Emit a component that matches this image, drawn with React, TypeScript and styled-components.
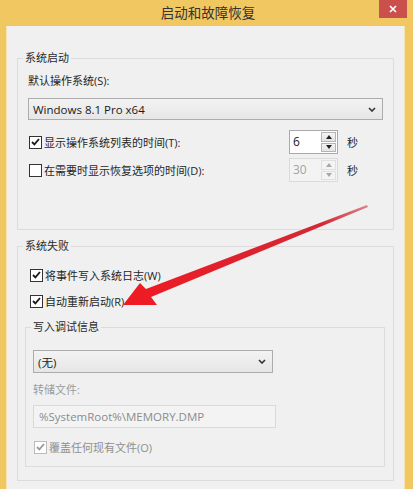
import React from 'react';
import styled, { createGlobalStyle } from 'styled-components';

const GlobalStyle = createGlobalStyle`
  html, body { margin: 0; padding: 0; background: #f1c762; }
  body {
    font-family: "Open Sans", "Noto Sans CJK SC", sans-serif;
    font-size: 11px;
    color: #1f1f1f;
  }
`;

const Window = styled.div`
  position: relative;
  width: 413px;
  height: 489px;
  background: #f1c762;
  display: flex;
  flex-direction: column;
  overflow: hidden;
`;

const TitleBar = styled.div`
  height: 26px;
  flex: none;
  display: grid;
  grid-template-columns: 1fr auto 1fr;
  align-items: start;
`;

const Title = styled.div`
  grid-column: 2;
  line-height: 26px;
  font-size: 13.5px;
  color: #333;
  padding-left: 3px;
`;

const CloseButton = styled.div`
  grid-column: 3;
  justify-self: end;
  width: 28px;
  height: 18px;
  margin-right: 6px;
  background: #c9504c;
  display: flex;
  align-items: center;
  justify-content: center;
`;

const Body = styled.div`
  flex: 1;
  margin: 0 9px 0 7px;
  background: #f0f0f0;
  padding: 25px 10px 0 10px;
  box-shadow: -1px 0 0 #f7e3b0, 1px 0 0 #f7e3b0;
`;

const Group = styled.fieldset`
  margin: 0;
  min-width: 0;
  border: 1px solid #dcdcdc;
  padding: 0 10px 47px 10px;
  display: flex;
  flex-direction: column;
  align-items: flex-start;
`;

const FailGroup = styled(Group)`
  margin-top: 9px;
  padding: 0 10px 13px 11px;
`;

const DebugGroup = styled(Group)`
  align-self: stretch;
  margin: 11px -2px 0 -4px;
  padding: 0 10px 11px 7px;
`;

const Legend = styled.legend<{ $shift?: number }>`
  padding: 0 2px;
  margin-left: ${p => p.$shift ?? -5}px;
  line-height: 14px;
  height: 14px;
  color: #2a2a2a;
`;

const FieldLabel = styled.div<{ $disabled?: boolean; $top: number }>`
  line-height: 16px;
  margin-top: ${p => p.$top}px;
  color: ${p => (p.$disabled ? '#9b9b9b' : '#1f1f1f')};
`;

const Select = styled.div<{ $width?: number; $top: number; $height: number }>`
  box-sizing: border-box;
  margin-top: ${p => p.$top}px;
  width: ${p => (p.$width ? `${p.$width}px` : '100%')};
  height: ${p => p.$height}px;
  border: 1px solid #acacac;
  background: linear-gradient(#f3f3f3, #e6e6e6);
  display: flex;
  align-items: center;
  justify-content: space-between;
  padding: 0 6px 0 4px;
  font-size: 11.5px;
  color: #1a1a1a;
`;

const TextBox = styled.div<{ $width: number; $top: number }>`
  box-sizing: border-box;
  margin-top: ${p => p.$top}px;
  width: ${p => p.$width}px;
  height: 23px;
  border: 1px solid #d9d9d9;
  background: #f3f3f3;
  display: flex;
  align-items: center;
  padding-left: 5px;
  font-size: 11.5px;
  color: #8c8c8c;
`;

const CheckRow = styled.div<{ $top: number; $height?: number }>`
  align-self: stretch;
  display: flex;
  align-items: center;
  margin-top: ${p => p.$top}px;
  height: ${p => p.$height ?? 16}px;
  margin-left: 1px;
`;

const CheckLabel = styled.span<{ $disabled?: boolean }>`
  flex: 1;
  white-space: nowrap;
  color: ${p => (p.$disabled ? '#8f8f8f' : '#1f1f1f')};
`;

const Box = styled.span<{ $disabled?: boolean }>`
  box-sizing: border-box;
  width: 13px;
  height: 13px;
  margin-right: 2px;
  flex: none;
  border: 1px solid ${p => (p.$disabled ? '#bcbcbc' : '#333')};
  background: #fff;
  display: flex;
  align-items: center;
  justify-content: center;
`;

const Spinner = styled.div<{ $disabled?: boolean }>`
  box-sizing: border-box;
  width: 49px;
  height: 24px;
  display: flex;
  border: 1px solid ${p => (p.$disabled ? '#dadada' : '#a9a9a9')};
  background: ${p => (p.$disabled ? '#f3f3f3' : '#fff')};
`;

const SpinValue = styled.div<{ $disabled?: boolean }>`
  flex: 1;
  padding: 2px 0 0 3px;
  font-size: 12px;
  color: ${p => (p.$disabled ? '#a3a3a3' : '#1a1a1a')};
`;

const SpinButtons = styled.div`
  width: 15px;
  display: flex;
  flex-direction: column;
  gap: 1px;
  padding: 1px 1px 1px 0;
`;

const SpinButton = styled.div<{ $disabled?: boolean }>`
  flex: 1;
  border: 1px solid ${p => (p.$disabled ? '#e0e0e0' : '#b5b5b5')};
  background: ${p => (p.$disabled ? '#f4f4f4' : 'linear-gradient(#f4f4f4, #e3e3e3)')};
  display: flex;
  align-items: center;
  justify-content: center;
`;

const Unit = styled.span`
  margin: 0 25px 0 9px;
  font-size: 11px;
`;

const ArrowLayer = styled.svg`
  position: absolute;
  left: 0;
  top: 0;
  pointer-events: none;
`;

function Check({ disabled }: { disabled?: boolean }) {
  return (
    <Box $disabled={disabled}>
      <svg width="9" height="8" viewBox="0 0 9 8">
        <polyline
          points="1,4 3.4,6.4 8,1"
          fill="none"
          stroke={disabled ? '#9a9a9a' : '#1a1a1a'}
          strokeWidth="1.8"
        />
      </svg>
    </Box>
  );
}

function Chevron() {
  return (
    <svg width="8" height="5" viewBox="0 0 8 5">
      <polyline points="1,1 4,4 7,1" fill="none" stroke="#333" strokeWidth="1.6" />
    </svg>
  );
}

function Triangle({ up, disabled }: { up?: boolean; disabled?: boolean }) {
  return (
    <svg width="6" height="4" viewBox="0 0 6 4">
      <polygon
        points={up ? '0,4 3,0 6,4' : '0,0 6,0 3,4'}
        fill={disabled ? '#a8a8a8' : '#222'}
      />
    </svg>
  );
}

function SpinBox({ value, disabled }: { value: string; disabled?: boolean }) {
  return (
    <Spinner $disabled={disabled}>
      <SpinValue $disabled={disabled}>{value}</SpinValue>
      <SpinButtons>
        <SpinButton $disabled={disabled}>
          <Triangle up disabled={disabled} />
        </SpinButton>
        <SpinButton $disabled={disabled}>
          <Triangle disabled={disabled} />
        </SpinButton>
      </SpinButtons>
    </Spinner>
  );
}

export default function App() {
  return (
    <Window>
      <GlobalStyle />
      <TitleBar>
        <Title>启动和故障恢复</Title>
        <CloseButton>
          <svg width="8" height="8" viewBox="0 0 8 8">
            <path d="M1 1 L7 7 M7 1 L1 7" stroke="#fff" strokeWidth="1.6" />
          </svg>
        </CloseButton>
      </TitleBar>
      <Body>
        <Group>
          <Legend>系统启动</Legend>
          <FieldLabel $top={8}>默认操作系统(S):</FieldLabel>
          <Select $top={9} $height={22}>
            <span>Windows 8.1 Pro x64</span>
            <Chevron />
          </Select>
          <CheckRow $top={10} $height={24}>
            <Check />
            <CheckLabel>显示操作系统列表的时间(T):</CheckLabel>
            <SpinBox value="6" />
            <Unit>秒</Unit>
          </CheckRow>
          <CheckRow $top={4} $height={24}>
            <Box />
            <CheckLabel>在需要时显示恢复选项的时间(D):</CheckLabel>
            <SpinBox value="30" disabled />
            <Unit>秒</Unit>
          </CheckRow>
        </Group>

        <FailGroup>
          <Legend $shift={-6}>系统失败</Legend>
          <CheckRow $top={14}>
            <Check />
            <CheckLabel>将事件写入系统日志(W)</CheckLabel>
          </CheckRow>
          <CheckRow $top={10}>
            <Check />
            <CheckLabel>自动重新启动(R)</CheckLabel>
          </CheckRow>
          <DebugGroup>
            <Legend $shift={-2}>写入调试信息</Legend>
            <Select $top={16} $height={23} $width={240}>
              <span>(无)</span>
              <Chevron />
            </Select>
            <FieldLabel $top={9} $disabled>
              转储文件:
            </FieldLabel>
            <TextBox $top={7} $width={243}>
              %SystemRoot%\MEMORY.DMP
            </TextBox>
            <CheckRow $top={11}>
              <Check disabled />
              <CheckLabel $disabled>覆盖任何现有文件(O)</CheckLabel>
            </CheckRow>
          </DebugGroup>
        </FailGroup>
      </Body>

      <ArrowLayer width="413" height="489" viewBox="0 0 413 489">
        <defs>
          <linearGradient id="shaft" x1="367" y1="205" x2="140" y2="300" gradientUnits="userSpaceOnUse">
            <stop offset="0" stopColor="#d9848c" />
            <stop offset="0.2" stopColor="#d32834" />
            <stop offset="1" stopColor="#ee1b24" />
          </linearGradient>
        </defs>
        <polygon
          points="367,205 368,207 151,297 157,305 123,305 140,283 146,289"
          fill="url(#shaft)"
        />
      </ArrowLayer>
    </Window>
  );
}
